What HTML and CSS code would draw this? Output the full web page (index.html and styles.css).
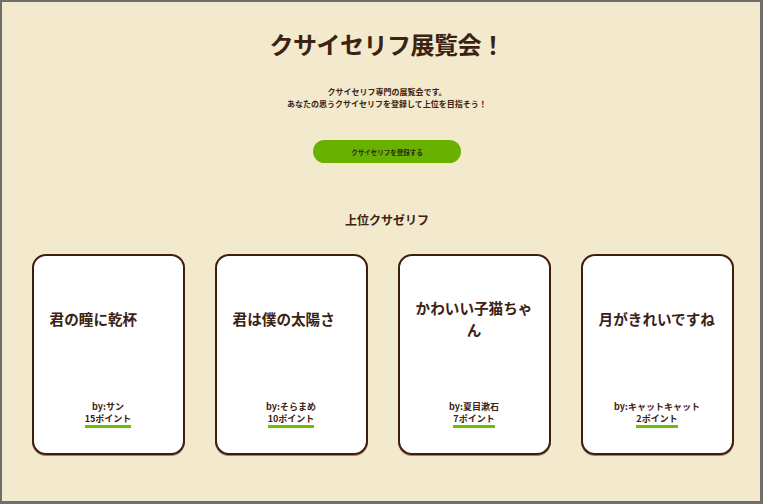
FILE: index.html
```html
<!DOCTYPE html>
<html lang="ja">
<head>
<meta charset="utf-8">
<title>クサイセリフ展覧会！</title>
<link rel="stylesheet" href="styles.css">
</head>
<body>
<div class="frame">
  <header class="hero">
    <h1 class="title">クサイセリフ展覧会！</h1>
    <p class="desc">クサイセリフ専門の展覧会です。<br>あなたの思うクサイセリフを登録して上位を目指そう！</p>
    <a class="btn" href="#">クサイセリフを登録する</a>
  </header>
  <section class="ranking">
    <h2 class="sub">上位クサゼリフ</h2>
    <div class="cards">
      <div class="card">
        <div class="card-title"><span class="card-text">君の瞳に乾杯</span></div>
        <div class="card-foot"><div class="by">by:サン</div><div class="pt">15ポイント</div></div>
      </div>
      <div class="card">
        <div class="card-title"><span class="card-text">君は僕の太陽さ</span></div>
        <div class="card-foot"><div class="by">by:そらまめ</div><div class="pt">10ポイント</div></div>
      </div>
      <div class="card">
        <div class="card-title"><span class="card-text card-text--wrap">かわいい子猫ちゃん</span></div>
        <div class="card-foot"><div class="by">by:夏目漱石</div><div class="pt">7ポイント</div></div>
      </div>
      <div class="card">
        <div class="card-title"><span class="card-text">月がきれいですね</span></div>
        <div class="card-foot"><div class="by">by:キャットキャット</div><div class="pt">2ポイント</div></div>
      </div>
    </div>
  </section>
</div>
</body>
</html>
```
FILE: styles.css
```css
html, body {
  margin: 0;
  padding: 0;
}
body {
  font-family: "Noto Sans CJK JP", "Noto Sans", sans-serif;
  color: #3b2212;
  background: #f3e9cd;
}
.frame {
  box-sizing: border-box;
  width: 763px;
  height: 504px;
  border: 2px solid #6e6e6e;
  border-right-width: 3px;
  border-bottom-width: 3px;
  background: #f3e9cd;
  padding-top: 26px;
}
.hero {
  display: flex;
  flex-direction: column;
  align-items: center;
  padding-left: 12px;
}
.title {
  margin: 0;
  font-size: 24px;
  line-height: 32px;
  font-weight: 700;
  letter-spacing: -0.5px;
}
.desc {
  margin: 26px 0 0;
  font-size: 8px;
  line-height: 12px;
  font-weight: 700;
  text-align: center;
}
.btn {
  margin-top: 30px;
  width: 148px;
  height: 23px;
  border-radius: 12px;
  background: #69b100;
  color: #2e2a10;
  font-size: 6.5px;
  font-weight: 700;
  text-decoration: none;
  display: flex;
  align-items: center;
  justify-content: center;
}
.ranking {
  margin-top: 49px;
}
.sub {
  margin: 0;
  padding-left: 12px;
  text-align: center;
  font-size: 12px;
  line-height: 16px;
  font-weight: 700;
}
.cards {
  margin-top: 26px;
  display: flex;
  justify-content: center;
  gap: 30px;
  padding-left: 3px;
}
.card {
  box-sizing: border-box;
  width: 153px;
  height: 201px;
  background: #fff;
  border: 2px solid #3d1f0c;
  border-radius: 14px;
  box-shadow: 0 1px 0 rgba(61, 31, 12, 0.5);
  display: flex;
  flex-direction: column;
  padding: 0 10px;
}
.card-title {
  height: 126px;
  display: flex;
  align-items: center;
  justify-content: center;
  text-align: center;
  font-size: 14.6px;
  line-height: 22px;
  font-weight: 700;
  padding-top: 0;
  box-sizing: border-box;
}
.card-text {
  display: inline-block;
  min-width: 8em;
  text-align: left;
}
.card-text--wrap {
  text-align: center;
}
.card-foot {
  display: flex;
  flex-direction: column;
  align-items: center;
  padding-top: 18px;
}
.by {
  font-size: 9px;
  line-height: 13px;
  font-weight: 700;
}
.pt {
  font-size: 9px;
  line-height: 12px;
  font-weight: 700;
  border-bottom: 3px solid #6cc000;
  padding-bottom: 0;
}
```
